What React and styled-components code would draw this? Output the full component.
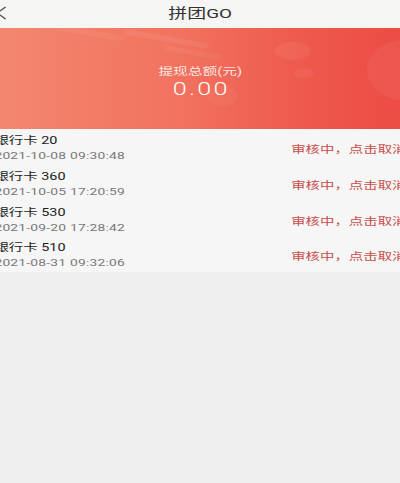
import React from "react";
import styled, { createGlobalStyle } from "styled-components";

const Global = createGlobalStyle`
  html, body { margin: 0; padding: 0; background: #eeefee; }
  body { font-family: Roboto, "Noto Sans CJK SC", "Noto Sans", sans-serif; }
`;

/* The whole view is drawn horizontally widened, like a stretched phone capture */
const Frame = styled.div`
  width: 400px;
  height: 483px;
  overflow: hidden;
  background: #eeefee;
`;

const Stage = styled.div`
  width: 286px;
  transform: scaleX(1.4);
  transform-origin: 0 0;
`;

const Header = styled.header`
  height: 28px;
  background: #f5f5f4;
  display: grid;
  grid-template-columns: 1fr auto 1fr;
  align-items: center;
`;

const Back = styled.button`
  justify-self: start;
  margin-left: -4px;
  margin-top: -3px;
  width: 10px;
  height: 14px;
  padding: 0;
  border: 0;
  background: none;
  display: flex;
`;

const Title = styled.h1`
  margin: -5px 0 0;
  font-size: 13.5px;
  font-weight: 400;
  color: #333;
`;

const Banner = styled.section`
  position: relative;
  overflow: hidden;
  height: 101px;
  background: linear-gradient(90deg, #f3876f 0%, #f1725f 45%, #ee5a4d 75%, #ec4c45 100%);
  display: flex;
  flex-direction: column;
  align-items: center;
  padding-top: 37px;
  box-sizing: border-box;
`;

const BannerArt = styled.svg`
  position: absolute;
  inset: 0;
  width: 100%;
  height: 100%;
`;

const Label = styled.div`
  position: relative;
  font-size: 10.5px;
  line-height: 14px;
  color: rgba(255, 255, 255, 0.85);
`;

const Amount = styled.div`
  position: relative;
  font-family: Roboto, "Noto Sans", sans-serif;
  font-weight: 300;
  font-size: 18px;
  line-height: 20px;
  color: #fff;
  letter-spacing: 1.6px;
  margin-right: -1.6px;
`;

const List = styled.ul`
  list-style: none;
  margin: 0;
  padding: 0;
  background: #f6f6f6;
`;

const Row = styled.li`
  height: 35.8px;
  display: flex;
  align-items: flex-start;
  justify-content: space-between;
`;

const Info = styled.div`
  margin-left: -4px;
  padding-top: 6px;
  display: flex;
  flex-direction: column;
  gap: 3px;
`;

const Name = styled.div`
  font-size: 10.3px;
  font-weight: 400;
  line-height: 12px;
  color: #1c1c1c;
`;

const Time = styled.div`
  font-size: 9.9px;
  line-height: 12px;
  color: #777;
  letter-spacing: 0.15px;
`;

const Status = styled.button`
  flex: none;
  width: 78px;
  margin-top: 13px;
  padding: 0;
  border: 0;
  background: none;
  text-align: left;
  white-space: nowrap;
  font-family: "Noto Sans CJK SC", sans-serif;
  font-size: 10.3px;
  line-height: 14px;
  color: #c94f4c;
`;

const records = [
  { amount: 20, time: "2021-10-08 09:30:48" },
  { amount: 360, time: "2021-10-05 17:20:59" },
  { amount: 530, time: "2021-09-20 17:28:42" },
  { amount: 510, time: "2021-08-31 09:32:06" },
];

export default function App() {
  return (
    <>
      <Global />
      <Frame>
        <Stage>
          <Header>
            <Back aria-label="返回">
              <svg width="10" height="14" viewBox="0 0 10 14">
                <path d="M8 1 L2 7 L8 13" fill="none" stroke="#555" strokeWidth="1.1" />
              </svg>
            </Back>
            <Title>拼团GO</Title>
          </Header>
          <Banner>
            <BannerArt viewBox="0 0 286 101" preserveAspectRatio="none" aria-hidden="true">
              <g fill="#fff">
                <rect x="40" y="2" width="50" height="6" rx="3" opacity="0.05" transform="rotate(14 65 5)" />
                <rect x="88" y="8" width="62" height="6" rx="3" opacity="0.06" transform="rotate(14 119 11)" />
                <rect x="118" y="22" width="40" height="5" rx="2.5" opacity="0.05" transform="rotate(14 138 24)" />
                <ellipse cx="209" cy="23" rx="13" ry="9" opacity="0.06" />
                <ellipse cx="217" cy="45" rx="7" ry="5" opacity="0.05" />
                <ellipse cx="159" cy="68" rx="11" ry="10" opacity="0.04" />
                <ellipse cx="288" cy="42" rx="26" ry="30" opacity="0.05" />
              </g>
            </BannerArt>
            <Label>提现总额(元)</Label>
            <Amount>0.00</Amount>
          </Banner>
          <List>
            {records.map((r) => (
              <Row key={r.time}>
                <Info>
                  <Name>银行卡 {r.amount}</Name>
                  <Time>{r.time}</Time>
                </Info>
                <Status>审核中，点击取消</Status>
              </Row>
            ))}
          </List>
        </Stage>
      </Frame>
    </>
  );
}
